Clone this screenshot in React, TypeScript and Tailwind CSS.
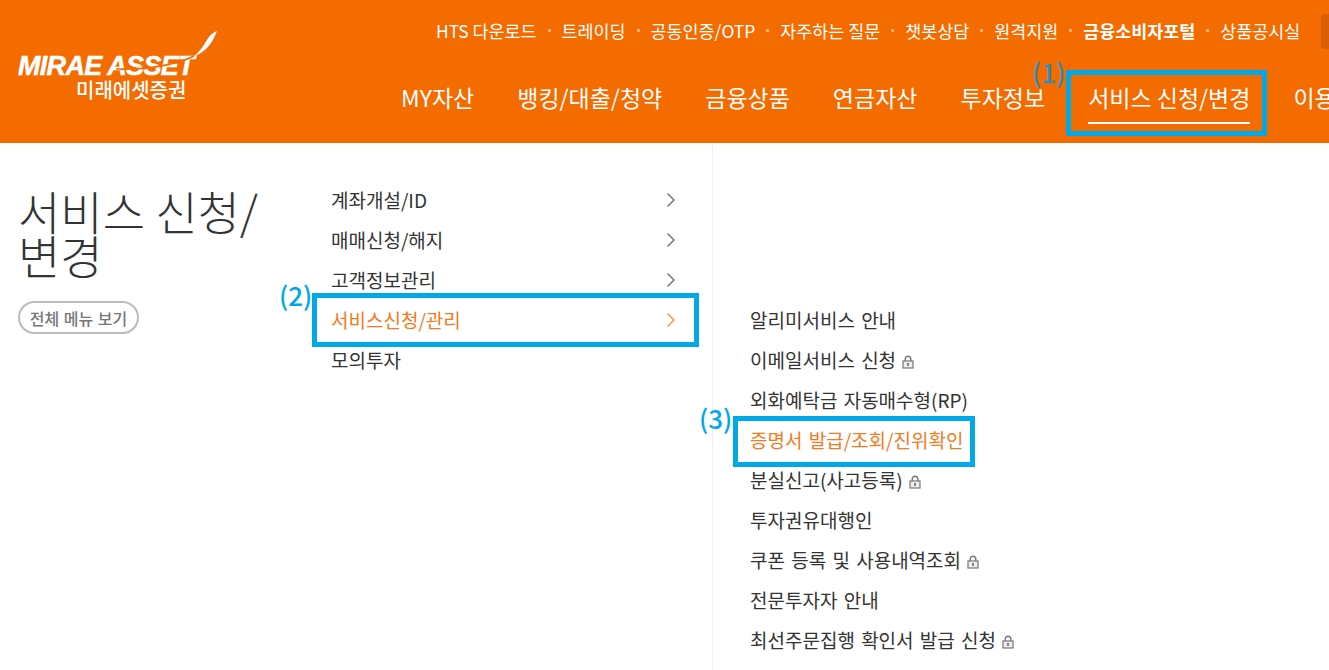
import { ChevronRight } from "lucide-react";

const font = "font-['Noto_Sans_CJK_KR','Noto_Sans',sans-serif]";

const utilLinks = [
  { label: "HTS 다운로드" },
  { label: "트레이딩" },
  { label: "공동인증/OTP" },
  { label: "자주하는 질문" },
  { label: "챗봇상담" },
  { label: "원격지원" },
  { label: "금융소비자포털", bold: true },
  { label: "상품공시실" },
];

const mainNav = ["MY자산", "뱅킹/대출/청약", "금융상품", "연금자산", "투자정보", "서비스 신청/변경", "이용안내"];

const depth2 = [
  { label: "계좌개설/ID", arrow: true },
  { label: "매매신청/해지", arrow: true },
  { label: "고객정보관리", arrow: true },
  { label: "서비스신청/관리", arrow: true, active: true },
  { label: "모의투자", arrow: false },
];

const depth3 = [
  { label: "알리미서비스 안내" },
  { label: "이메일서비스 신청", lock: true },
  { label: "외화예탁금 자동매수형(RP)" },
  { label: "증명서 발급/조회/진위확인", active: true },
  { label: "분실신고(사고등록)", lock: true },
  { label: "투자권유대행인" },
  { label: "쿠폰 등록 및 사용내역조회", lock: true },
  { label: "전문투자자 안내" },
  { label: "최선주문집행 확인서 발급 신청", lock: true },
];

function Lock() {
  return (
    <svg width="12" height="14" viewBox="0 0 12 14" className="ml-[6px] mt-[3px] shrink-0" fill="none">
      <path d="M3.2 6V4a2.8 2.8 0 0 1 5.6 0v2" stroke="#777" strokeWidth="1.4" />
      <rect x="1" y="6" width="10" height="7" fill="#eee" stroke="#777" strokeWidth="1.2" />
      <rect x="5.2" y="8" width="1.6" height="3" fill="#666" />
    </svg>
  );
}

function Logo() {
  return (
    <div className="relative h-[143px] w-[401px] shrink-0 text-white">
      <div className="absolute left-[18px] top-[53px] font-['Liberation_Sans',sans-serif] text-[27px] font-bold italic leading-[26px] tracking-[-0.7px] [-webkit-text-stroke:0.5px_white]">
        MIRAE ASSET
      </div>
      <svg width="110" height="50" viewBox="0 0 110 50" className="absolute left-[110px] top-[28px]" fill="none">
        <path d="M6 41 C40 42 68 36 84 28" stroke="#f46b00" strokeWidth="1.6" />
        <path d="M84 28 C92 22 95 14 99 9 C101 6 104 4 107 3 C104 10 102 15 97 20 C93 24 88 27 84 28Z" fill="#fff" />
      </svg>
      <div className="absolute left-[76px] top-[79px] text-[20px] font-medium leading-[22px]">
        미래에셋증권
      </div>
    </div>
  );
}

export default function App() {
  return (
    <div className={`relative h-[670px] w-[1329px] overflow-hidden bg-white ${font}`}>
      <header className="flex h-[143px] bg-[#f46b00]">
        <Logo />
        <div className="min-w-0 flex-1">
          <ul className="ml-[35px] flex h-[62px] items-center whitespace-nowrap text-[17.4px] text-white">
            {utilLinks.map((item, i) => (
              <li key={item.label} className="flex items-center">
                {i > 0 && <span className="mx-[11px] h-[3px] w-[3px] bg-[#fbb27a]" />}
                <span className={item.bold ? "font-bold" : ""}>{item.label}</span>
              </li>
            ))}
            <li className="ml-[21px] h-[35px] w-[30px] shrink-0 rounded-[4px] bg-[#d95f00]" />
          </ul>
          <nav className="flex gap-[43px] whitespace-nowrap text-[23px] text-white">
            {mainNav.map((label) => (
              <a key={label} className="relative block h-[62px] pt-[23px] leading-[24px]">
                {label}
                {label === "서비스 신청/변경" && (
                  <span className="absolute bottom-[0px] left-0 right-0 h-[2px] bg-white" />
                )}
              </a>
            ))}
          </nav>
        </div>
      </header>

      <main className="flex h-[527px]">
        <div className="w-[331px] shrink-0 pl-[18px] pt-[45px]">
          <h2 className="w-[250px] text-[46px] font-light leading-[44px] text-[#333]">서비스 신청/변경</h2>
          <button className="mt-[25px] flex h-[33px] w-[121px] items-center justify-center rounded-full border-2 border-[#bbb] text-[16px] font-medium text-[#777] [word-spacing:1px]">
            전체 메뉴 보기
          </button>
        </div>

        <ul className="h-full w-[382px] shrink-0 border-r border-[#eeeeee] pr-[29px] pt-[37px]">
          {depth2.map((item) => (
            <li
              key={item.label}
              className={`flex h-[40px] items-center justify-between text-[19px] ${
                item.active ? "text-[#f47a20]" : "text-[#333]"
              }`}
            >
              {item.label}
              {item.arrow && (
                <ChevronRight
                  size={24}
                  strokeWidth={1.3}
                  className={item.active ? "text-[#f58a3c]" : "text-[#666]"}
                />
              )}
            </li>
          ))}
        </ul>

        <ul className="flex-1 pl-[37px] pt-[157px] [word-spacing:2px]">
          {depth3.map((item) => (
            <li
              key={item.label}
              className={`flex h-[40px] items-center text-[19px] ${
                item.active ? "text-[#f47a20]" : "text-[#333]"
              }`}
            >
              {item.label}
              {item.lock && <Lock />}
            </li>
          ))}
        </ul>
      </main>

      {/* guide annotations drawn over the page */}
      <div className="absolute left-[1066px] top-[70px] h-[66px] w-[201px] border-[5px] border-[#00a8e8]" />
      <div className="absolute left-[1032px] top-[59px] text-[26px] font-medium leading-[26px] text-[#2b8fc4]">(1)</div>
      <div className="absolute left-[312px] top-[293px] h-[54px] w-[387px] border-[5px] border-[#00a8e8]" />
      <div className="absolute left-[279px] top-[276px] text-[26px] font-medium leading-[38px] text-[#00a8e8]">(2)</div>
      <div className="absolute left-[733px] top-[416px] h-[51px] w-[242px] border-[5px] border-[#00a8e8]" />
      <div className="absolute left-[699px] top-[399px] text-[26px] font-medium leading-[38px] text-[#00a8e8]">(3)</div>
    </div>
  );
}
